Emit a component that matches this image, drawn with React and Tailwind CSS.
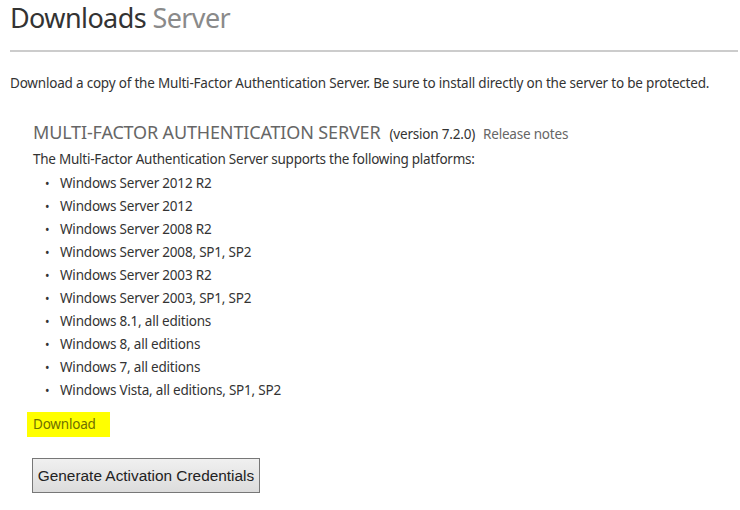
const PLATFORMS = [
  'Windows Server 2012 R2',
  'Windows Server 2012',
  'Windows Server 2008 R2',
  'Windows Server 2008, SP1, SP2',
  'Windows Server 2003 R2',
  'Windows Server 2003, SP1, SP2',
  'Windows 8.1, all editions',
  'Windows 8, all editions',
  'Windows 7, all editions',
  'Windows Vista, all editions, SP1, SP2',
];

export default function App() {
  return (
    <div className="min-h-[510px] bg-white pl-[10px] pr-[2px] font-['Noto_Sans',sans-serif] text-[#333]">
      {/* Page title */}
      <h1 className="pt-[0px] text-[27px] leading-[36px] font-normal tracking-[-0.6px]">
        <span className="text-[#333]">Downloads</span>{' '}
        <span className="text-[#8a8a8a]">Server</span>
      </h1>
      <div className="mt-[14px] h-[2px] bg-[#cccccc]" />

      <p className="mt-[21px] text-[13.5px] leading-[20px] tracking-[-0.2px]">
        Download a copy of the Multi-Factor Authentication Server. Be sure to install directly on the server to be protected.
      </p>

      {/* Server section */}
      <div className="mt-[27px] pl-[23px]">
        <h2 className="flex items-baseline text-[18px] leading-[24px] font-normal text-[#666] tracking-[-0.15px]">
          MULTI-FACTOR AUTHENTICATION SERVER
          <span className="ml-[9px] text-[13.5px] text-[#333] tracking-[-0.2px]">(version 7.2.0)</span>
          <a className="ml-[8px] text-[13.5px] text-[#666] tracking-[-0.2px]">Release notes</a>
        </h2>

        <p className="mt-[3px] text-[13.5px] leading-[20px] tracking-[-0.25px]">
          The Multi-Factor Authentication Server supports the following platforms:
        </p>

        <ul className="mt-[3px]">
          {PLATFORMS.map((p) => (
            <li key={p} className="flex h-[23px] items-center text-[13.5px] tracking-[-0.2px]">
              <span className="w-[27px] pl-[12px] text-[12px]">•</span>
              {p}
            </li>
          ))}
        </ul>

        <div className="mt-[10px] -ml-[6px] inline-flex h-[25px] items-center bg-[#ffff00] pl-[6px] pr-[14px]">
          <a className="text-[13.5px] text-[#6f6f00] tracking-[-0.2px]">Download</a>
        </div>

        <div className="mt-[21px]">
          <button className="h-[35px] w-[228px] -ml-[1px] border border-[#777] bg-gradient-to-b from-[#f0f0f0] to-[#dcdcdc] font-['Liberation_Sans',sans-serif] text-[15.4px] text-[#222]">
            Generate Activation Credentials
          </button>
        </div>
      </div>
    </div>
  );
}
